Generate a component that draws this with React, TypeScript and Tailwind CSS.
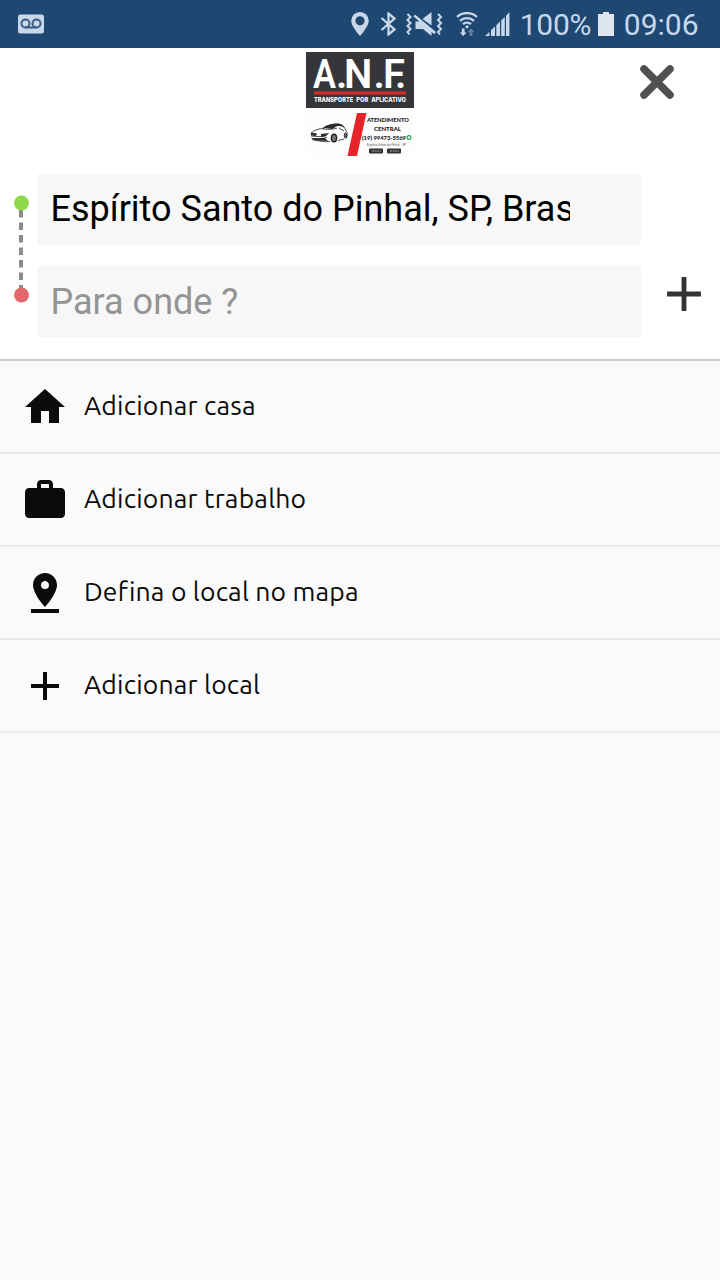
import type { ReactNode } from "react";
import { MdAdd, MdHome, MdPinDrop, MdWork } from "react-icons/md";

const PLACES = [
  { id: "home", label: "Adicionar casa", icon: MdHome },
  { id: "work", label: "Adicionar trabalho", icon: MdWork },
  { id: "map", label: "Defina o local no mapa", icon: MdPinDrop },
  { id: "other", label: "Adicionar local", icon: MdAdd },
];

function StatusIcon({ width, className, children }: { width: number; className?: string; children: ReactNode }) {
  return (
    <svg width={width} height="24" viewBox={`0 0 ${width} 24`} fill="currentColor" className={className}>
      {children}
    </svg>
  );
}

function StatusBar() {
  return (
    <div className="h-12 bg-[#1e4872] text-[#c8d8ea] flex items-center pl-[18px] pr-[21.5px]">
      {/* Voicemail */}
      <svg width="26" height="20" viewBox="0 0 26 20">
        <rect width="26" height="19" y="0.5" rx="2.5" fill="currentColor" />
        <g fill="none" stroke="#3a5f86" strokeWidth="2">
          <circle cx="7.5" cy="9.5" r="4" />
          <circle cx="18.5" cy="9.5" r="4" />
          <path d="M7.5 13.5h11" />
        </g>
      </svg>

      <div className="ml-auto flex items-center">
        <StatusIcon width={18}>
          <path fillRule="evenodd" d="M9 0a8.800 8.800 0 0 0-8.800 8.800C.2 14.500 9 24 9 24s8.800-9.500 8.800-15.200A8.800 8.800 0 0 0 9 0zm0 4.200a4.600 4.600 0 1 1 0 9.200 4.600 4.600 0 0 1 0-9.200z" />
        </StatusIcon>
        <StatusIcon width={17} className="ml-[11px]">
          <path d="M1.500 6l13 11.500L8.500 22.500v-21l6 5L1.500 18" fill="none" stroke="currentColor" strokeWidth="2.300" />
        </StatusIcon>
        {/* Muted, vibrating */}
        <StatusIcon width={37} className="ml-[9px]">
          <g fill="none" stroke="currentColor" strokeWidth="2">
            <path d="M1.500 2l3 3-3 3 3 3-3 3 3 3-3 3 2 2.500" />
            <path d="M32 2l3 3-3 3 3 3-3 3 3 3-3 3 2 2.500" />
          </g>
          <path d="M25.500 0v13.500L16.500 7zM7.500 4.500L9 2.500l21 17.500-1.800 2-2.700-2V24l-8.500-7H9.500V9.500h4z" />
        </StatusIcon>
        <StatusIcon width={22} className="ml-[13px]">
          <g fill="none" stroke="currentColor" strokeWidth="2.300">
            <path d="M1 4.800c5.500-5 14.500-5 20 0" />
            <path d="M4 8.800c4-3.600 10-3.600 14 0" />
            <path d="M7 12.200c2.300-2 5.700-2 8 0" />
          </g>
          <circle cx="11" cy="14.800" r="1.600" />
          <path d="M5.800 16.500h2.800v4h2L7.200 24l-3.400-3.500h2z" />
          <path d="M13.600 24h2.800v-4h2L15 16.500 11.600 20h2z" opacity="0.4" />
        </StatusIcon>
        <StatusIcon width={25} className="ml-[7px]">
          <path d="M0 24l4.500-4v4zM6 18.300l4-3.800V24H6zM11.300 13.200l3.700-3.600V24h-3.700zM16.200 8.500l3.600-3.500V24h-3.600zM21 3.800L24.400.2V24H21z" />
        </StatusIcon>
        <span className="ml-2.5 w-[72px] pt-0.5 font-[Roboto,sans-serif] text-[30px] leading-none whitespace-nowrap tracking-[-0.3px]">
          100%
        </span>
        <StatusIcon width={16} className="ml-1.5 text-[#dfe6f0]">
          <path d="M5 0h6v2h5v22H0V2h5z" />
        </StatusIcon>
        <span className="ml-2.5 pt-0.5 font-[Roboto,sans-serif] text-[30px] leading-none">09:06</span>
      </div>
    </div>
  );
}

function BrandLogo() {
  return (
    <svg width="108" height="104" viewBox="0 0 108 104" className="font-[Lato,sans-serif] overflow-visible">
      <rect width="108" height="104" fill="#fdfdfd" />
      <rect width="108" height="56" fill="#35363a" />
      <g fill="#fff" fontFamily="Roboto" fontWeight="600" fontSize="40">
        <text x="7" y="36" textLength="23" lengthAdjust="spacingAndGlyphs">A</text>
        <text x="30 38 67.500 77 89" y="36">.N.F.</text>
      </g>
      <rect x="8" y="39.500" width="92" height="3" fill="#dc2a2c" />
      <text x="8" y="50" fill="#fff" fontFamily="Inter" fontSize="6.500" fontWeight="800" textLength="92" wordSpacing="2" lengthAdjust="spacingAndGlyphs">
        TRANSPORTE POR APLICATIVO
      </text>

      <path d="M51 61h9.500L51 104h-9.500z" fill="#e52329" />

      {/* Car */}
      <g fill="none" stroke="#3a3a3a" strokeWidth="0.900">
        <path d="M5 82c1-3 6-5 12-5.500 5-3.500 10-5 16-4.500 4 1 6 4 7 7 2 2 1.500 5 0 7.500" />
        <path d="M17 77c6 .5 11 .5 14-1M5 84c6 1 12 0 16 1.500M33 76l5 3" />
        <path d="M6 87.500c6 1.500 12 2.500 18 2M32 88.500l6-1.500" />
      </g>
      <path d="M16 76.500c4-4 12-5.500 18-4.500 2 .5 4 2 5 4-4-2.500-8-2.500-10-.5l-3 1.500c-4-.5-7-1-10-.5zM5 80.500l6 1-1 2.500-5-.5zM15 82l8-1-3 3-5 1zM5 86h14l3 3-13-.5z" fill="#2d2d2d" />
      <ellipse cx="28" cy="86" rx="2.600" ry="3.800" fill="#777" stroke="#222" strokeWidth="1.400" />
      <ellipse cx="39.500" cy="83.500" rx="1.200" ry="2.600" fill="#777" stroke="#222" />

      <g fill="#202020" fontWeight="900" fontSize="6">
        <text x="61" y="70" textLength="42" lengthAdjust="spacingAndGlyphs">ATENDIMENTO</text>
        <text x="68" y="79" textLength="27" lengthAdjust="spacingAndGlyphs">CENTRAL</text>
        <text x="56" y="88" textLength="44" lengthAdjust="spacingAndGlyphs">(19) 99473-5569</text>
      </g>
      <circle cx="103" cy="85.500" r="1.900" fill="none" stroke="#22a659" strokeWidth="1.200" />
      <text x="61" y="94" fill="#555" fontSize="4" textLength="39" lengthAdjust="spacingAndGlyphs">
        Espírito Santo do Pinhal - SP
      </text>
      <g fill="#333">
        <rect x="63" y="96.500" width="14" height="5" rx="0.700" />
        <rect x="81" y="96.500" width="14" height="5" rx="0.700" />
      </g>
      <path d="M66 99h9M84 99h9" stroke="#aaa" strokeWidth="1" strokeDasharray="2 0.700" />
    </svg>
  );
}

function RouteMarker() {
  return (
    <svg width="37" height="163" viewBox="0 0 37 163" className="shrink-0">
      <path d="M21 36v83" stroke="#8b8b8b" strokeWidth="4" strokeDasharray="7.500 5" />
      <circle cx="21.500" cy="29" r="7.500" fill="#8fd84b" />
      <circle cx="21.500" cy="121" r="7.500" fill="#e06a6b" />
    </svg>
  );
}

export default function App() {
  return (
    <div className="w-[720px] h-[1280px] bg-[#fafafa] flex flex-col overflow-hidden">
      <StatusBar />

      <header className="h-[313px] bg-white border-b-2 border-[#cbcbcb]">
        <div className="h-[126px] pt-1 grid grid-cols-3 items-start">
          <span />
          <div className="flex justify-center">
            <BrandLogo />
          </div>
          <button aria-label="Fechar" className="justify-self-end mr-[45px] mt-3">
            <svg width="36" height="36" viewBox="0 0 36 36" stroke="#505050" strokeWidth="7.500" strokeLinecap="round">
              <path d="M5 5l26 26M31 5L5 31" />
            </svg>
          </button>
        </div>

        {/* Origin and destination */}
        <div className="flex font-[Roboto,sans-serif] text-[36px]">
          <RouteMarker />
          <div className="w-[604px] space-y-[21px]">
            <div className="h-[71px] rounded-xs bg-[#f7f7f7] pl-[13.5px] flex items-center">
              <div className="w-[519px] pb-0.5 overflow-hidden whitespace-nowrap text-black">
                Espírito Santo do Pinhal, SP, Brasil
              </div>
            </div>
            <div className="h-[71px] rounded-xs bg-[#f7f7f7] pl-[13.5px] flex items-center text-[#949494]">
              <span>Para onde ?</span>
            </div>
          </div>
          <button aria-label="Adicionar parada" className="mt-[91px] ml-[14px] size-[58px] text-[#333]">
            <MdAdd className="size-[58px]" />
          </button>
        </div>
      </header>

      <ul>
        {PLACES.map(({ id, label, icon: Icon }) => (
          <li key={id} className="h-[93px] border-b-2 border-[#ebebeb] flex items-center pl-[21.4px] text-[#0b0b0b]">
            <Icon className="size-12 shrink-0" />
            <span className="ml-[14.6px] pb-1 font-[Ubuntu,'Noto_Sans',sans-serif] text-[26.5px] leading-9 tracking-[0.18px]">
              {label}
            </span>
          </li>
        ))}
      </ul>
    </div>
  );
}
